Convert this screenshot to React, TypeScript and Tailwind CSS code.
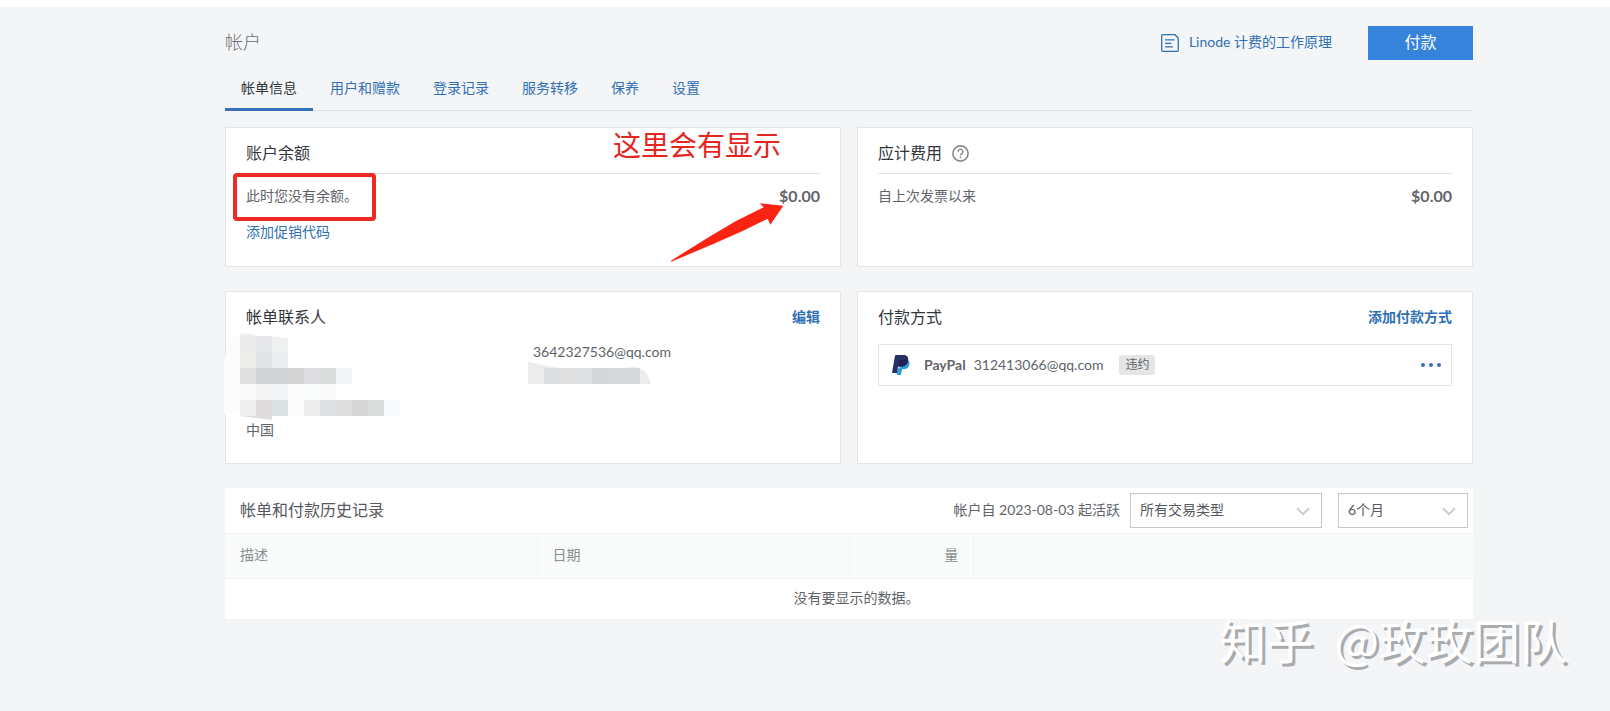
import React from 'react';

interface TabItem {
  label: string;
  active?: boolean;
}

const tabs: TabItem[] = [
  { label: '帐单信息', active: true },
  { label: '用户和赠款' },
  { label: '登录记录' },
  { label: '服务转移' },
  { label: '保养' },
  { label: '设置' },
];

const addressTiles: { y: number; fills: string[] }[] = [
  { y: 8, fills: ['#ebebec', '#e6e7ea', '#eff1f1'] },
  { y: 24, fills: ['#ededeb', '#e3e4e8', '#ebecef'] },
  { y: 40, fills: ['#dfdfdf', '#d1d2d5', '#d2d3d6', '#d4d4d5', '#dddde0', '#dadbdb', '#f4f5f8'] },
  { y: 56, fills: ['#fafafb', '#f5f5f5', '#f3f4f6', '#fbfbfb', '#fafdfc', '#fafafa'] },
  {
    y: 72,
    fills: ['#efefef', '#dcdadb', '#dae1e1', '#fbfbfb', '#ececec', '#dddfe2', '#dedede', '#d6d6d6', '#dadbdb', '#f9fafd'],
  },
];

const phoneTiles = ['#dddee1', '#dfdfdf', '#dedfe0', '#d6d7d8', '#d8d9da', '#d8d9db'];

const Card: React.FC<{ children: React.ReactNode; className: string }> = ({ children, className }) => (
  <section className={`relative bg-white border border-[#e3e5e8] px-5 pt-[13px] ${className}`}>{children}</section>
);

const CardTitle: React.FC<{ children: React.ReactNode }> = ({ children }) => (
  <h2 className="text-base leading-6 text-[#32363c]">{children}</h2>
);

const PayPalIcon = () => (
  <svg className="w-[18px] h-5" viewBox="0 0 18 20" aria-hidden="true">
    <path d="M15.9 4.9c1.6 1 2 2.700 1.600 4.700-.8 3.400-3 4.700-6 4.700h-.8c-.5 0-.8.3-.9.800l-.7 4.200c-.1.500-.3.700-.8.700H5.200c-.4 0-.6-.3-.5-.7l.8-5z" fill="#2f9bd8" />
    <path d="M3 .8C3.100.3 3.500 0 4 0h6.800c3.900 0 6 1.800 5.300 5.500-.8 4.100-3.400 6-7.300 6H6.900c-.5 0-.9.300-1 .900l-.9 5.500H.6c-.4 0-.6-.3-.5-.7z" fill="#253065" />
    <path d="M7.300 5.600c.1-.4.400-.6.800-.6h5c1.100 0 2 .1 2.900.500-.7 4.100-3.300 6-7.200 6H6.900c-.2 0-.4.100-.6.200z" fill="#1f2150" />
  </svg>
);

const AddressMask = () => (
  <svg className="absolute -left-0.5 top-[36px] w-[180px] h-[92px] pointer-events-none" viewBox="0 0 180 92" aria-hidden="true">
    <path d="M8 8Q2 20 0 38V86L20 86 L60 40 24 8z" fill="#fcfcfd" />
    <path d="M16 8V5.500Q28 5 34 8z" fill="#f1f1f2" />
    {addressTiles.map((row) =>
      row.fills.map((fill, i) => (
        <rect key={`${row.y}-${i}`} x={16 + i * 16} y={row.y} width={16} height={16} fill={fill} />
      )),
    )}
    <path d="M32 6.500L64 10V7H32z" fill="#fff" />
    <path d="M16 88L48 92V88z" fill="#e0dede" />
  </svg>
);

const PhoneMask = () => (
  <svg className="-ml-[5px] w-[123px] h-[22px]" viewBox="0 0 123 22" aria-hidden="true">
    <path d="M0 0C18 3 22 6 50 6.500C80 7 92 6.500 100 5.500C112 3 119 8 123 22H0z" fill="#ececed" />
    {phoneTiles.map((fill, i) => (
      <rect key={i} x={16 + i * 16} y={6} width={16} height={16} fill={fill} />
    ))}
  </svg>
);

interface FilterProps {
  label: string;
  options: string[];
  className: string;
}

const Filter: React.FC<FilterProps> = ({ label, options, className }) => (
  <div className={`relative ${className}`}>
    <select
      aria-label={label}
      className="block appearance-none w-full h-[35px] border border-[#c4c6c8] bg-white pl-[9px] pr-8 pb-0.5 text-sm text-[#55595e]"
    >
      {options.map((option) => (
        <option key={option}>{option}</option>
      ))}
    </select>
    <svg className="absolute right-3 top-[14px] w-[14px] h-[9px] pointer-events-none" viewBox="0 0 14 9" aria-hidden="true">
      <path d="M1 1.200L7 7.200L13 1.200" fill="none" stroke="#cbcdd0" strokeWidth="2" />
    </svg>
  </div>
);

const Header = () => (
  <header className="flex items-center justify-between">
    <h1 className="pb-0.5 text-lg leading-6 text-[#6a6e73] font-light">帐户</h1>
    <div className="flex items-center">
      <a href="#billing-docs" className="flex items-center gap-[10px] text-sm text-[#3170b5]">
        <svg className="w-[18px] h-[18px]" viewBox="0 0 18 18" fill="none" stroke="#3170b5" aria-hidden="true">
          <path d="M1.700.7H14l3.300 3.500V16.300q0 1-1 1H1.700q-1 0-1-1V1.700q0-1 1-1z" strokeWidth="1.300" />
          <path d="M4 5.900h9.500M4 9.400h6.500M4 12.900h8" strokeWidth="1.300" />
        </svg>
        <span className="pb-0.5">Linode 计费的工作原理</span>
      </a>
      <button className="ml-9 w-[105px] h-[34px] pb-0.5 bg-[#3683dc] text-white text-base">付款</button>
    </div>
  </header>
);

export default function App() {
  return (
    <div className="relative min-h-screen overflow-hidden bg-[#f4f5f7] border-t-[7px] border-white font-['Lato','Noto_Sans_CJK_SC',sans-serif] text-sm text-[#606469]">
      <main className="pl-[225px] pr-[137px] pt-[19px]">
        <Header />

        <div role="tablist" className="mt-2 flex gap-px shadow-[inset_0_-1px_0_#e0e2e5]">
          {tabs.map((tab) => (
            <button
              key={tab.label}
              role="tab"
              aria-selected={!!tab.active}
              className={`px-4 py-[10px] leading-5 border-b-[3px] ${
                tab.active ? 'border-[#3670bd] text-[#32363c]' : 'border-transparent text-[#3170b5]'
              }`}
            >
              {tab.label}
            </button>
          ))}
        </div>

        <div className="mt-4 grid grid-cols-2 gap-x-4 gap-y-6">
          <Card className="min-h-[140px]">
            <div className="border-b border-[#dfe0e2] pb-2">
              <CardTitle>账户余额</CardTitle>
            </div>
            <div className="mt-3 flex justify-between leading-5">
              <p>此时您没有余额。</p>
              <strong className="text-base leading-5">$0.00</strong>
            </div>
            <a href="#promo" className="mt-4 inline-block leading-5 text-[#3170b5]">
              添加促销代码
            </a>

            <div className="absolute left-[7px] top-[45px] w-[143px] h-12 border-4 border-[#ee2a24] rounded-[4px]" />
            <p className="absolute right-[59px] -top-px text-[28px] leading-9 text-[#e3271f]">这里会有显示</p>
            <svg className="absolute right-[56px] top-[75px] w-[113px] h-[59px]" viewBox="0 0 339 177" aria-hidden="true">
              <path d="M0 173L115 101L195 54L278 13L266 1L337 8L298 65L290 47L215 84L125 124L1 176z" fill="#fb2413" />
            </svg>
          </Card>

          <Card className="min-h-[140px]">
            <div className="flex items-center gap-[10px] border-b border-[#dfe0e2] pb-2">
              <CardTitle>应计费用</CardTitle>
              <svg className="w-[17px] h-[17px]" viewBox="0 0 17 17" fill="none" stroke="#888b8f" aria-hidden="true">
                <circle cx="8.500" cy="8.500" r="7.600" strokeWidth="1.600" />
                <path d="M6.100 6.700a2.400 2.400 0 1 1 3.800 2c-.9.600-1.400 1-1.400 1.900" strokeWidth="1.500" />
                <path d="M8.500 11.600v1.600" strokeWidth="1.600" />
              </svg>
            </div>
            <div className="mt-3 flex justify-between leading-5">
              <p>自上次发票以来</p>
              <strong className="text-base leading-5">$0.00</strong>
            </div>
          </Card>

          <Card className="min-h-[173px]">
            <div className="flex items-center justify-between">
              <CardTitle>帐单联系人</CardTitle>
              <a href="#edit" className="font-bold text-[#3170b5]">
                编辑
              </a>
            </div>
            <div className="mt-[13px] grid grid-cols-2 leading-5">
              <p className="pt-[78px]">中国</p>
              <div>
                <p>3642327536@qq.com</p>
                <PhoneMask />
              </div>
            </div>
            <AddressMask />
          </Card>

          <Card className="min-h-[173px]">
            <div className="flex items-center justify-between">
              <CardTitle>付款方式</CardTitle>
              <a href="#add-payment" className="font-bold text-[#3170b5]">
                添加付款方式
              </a>
            </div>
            <div className="mt-[15px] h-[42px] flex items-center border border-[#e3e5e8] pl-[13px] pr-[10px]">
              <PayPalIcon />
              <strong className="ml-[14px]">PayPal</strong>
              <span className="ml-2">312413066@qq.com</span>
              <span className="ml-4 px-[6px] h-5 leading-5 rounded-[3px] bg-[#e5e5e6] text-xs">违约</span>
              <button aria-label="更多操作" className="ml-auto">
                <svg className="w-5 h-1" viewBox="0 0 20 4" fill="#3670bd" aria-hidden="true">
                  <circle cx="2" cy="2" r="2" />
                  <circle cx="10" cy="2" r="2" />
                  <circle cx="18" cy="2" r="2" />
                </svg>
              </button>
            </div>
          </Card>
        </div>

        <section className="mt-6 bg-white">
          <div className="flex items-center pl-[15px] pr-[5px] h-[45px]">
            <h2 className="pb-0.5 text-base text-[#55595e]">帐单和付款历史记录</h2>
            <span className="ml-auto mr-[10px] pb-0.5">帐户自 2023-08-03 起活跃</span>
            <Filter label="交易类型" options={['所有交易类型']} className="w-[192px] mr-4" />
            <Filter label="时间范围" options={['6个月']} className="w-[130px]" />
          </div>
          <table className="w-full table-fixed border-collapse">
            <thead>
              <tr className="h-[45px] bg-[#f9fafa] border-y border-[#f1f3f4] text-left text-[#888f91]">
                <th className="w-1/4 px-[15px] pb-0.5 font-normal border-r border-[#f1f3f4]">描述</th>
                <th className="w-1/4 px-[15px] pb-0.5 font-normal border-r border-[#f1f3f4]">日期</th>
                <th className="w-1/10 px-[15px] pb-0.5 font-normal border-r border-[#f1f3f4] text-right">量</th>
                <th aria-label="操作" />
              </tr>
            </thead>
            <tbody>
              <tr className="h-[40px]">
                <td colSpan={4} className="pl-[15px] pb-0.5 text-center">
                  没有要显示的数据。
                </td>
              </tr>
            </tbody>
          </table>
        </section>
      </main>

      <p className="absolute right-[43px] bottom-[42px] whitespace-pre font-['Noto_Sans_CJK_SC',sans-serif] text-[47px] leading-[60px] text-white [text-shadow:3px_3px_0_#a9abad]">
        {'知乎  @玫玫团队'}
      </p>
    </div>
  );
}
